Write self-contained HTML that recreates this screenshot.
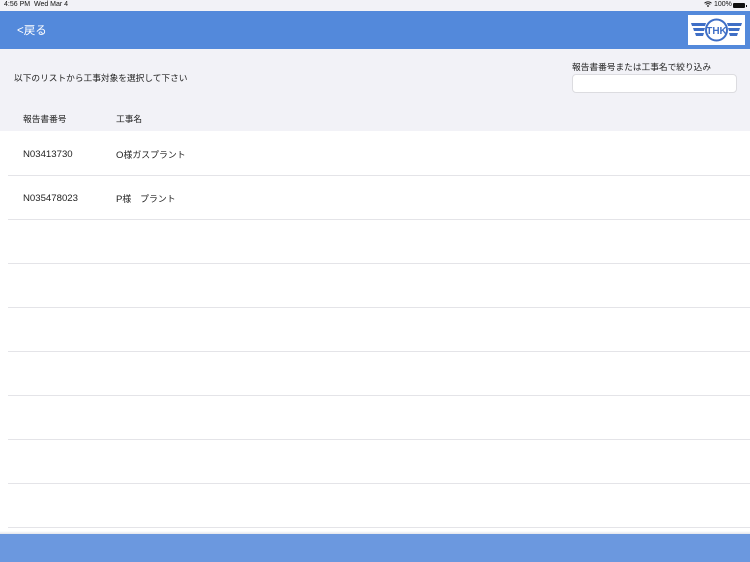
<!DOCTYPE html>
<html><head><meta charset="utf-8"><style>
*{margin:0;padding:0;box-sizing:border-box}
body{width:750px;height:562px;overflow:hidden;background:#f2f2f7;font-family:"Liberation Sans","Noto Sans CJK JP",sans-serif;color:#222;position:relative}
.abs{position:absolute}
.status{top:0;left:0;width:750px;height:11px;font-size:7px;color:#111;background:#f2f2f7}
.hdr{top:11px;left:0;width:750px;height:38px;background:#5389db}
.sep{left:8px;width:742px;height:1px;background:#e4e4e8}
.t{font-size:8.7px;line-height:12px;color:#222;white-space:nowrap}
.n{font-size:9.6px;line-height:12px;color:#222;white-space:nowrap}
</style></head><body>
<div class="abs status"><span class="abs" style="left:4px;top:1px">4:56 PM&nbsp;&nbsp;Wed Mar 4</span>
<span class="abs" style="left:704px;top:1px">
<svg width="8" height="6" viewBox="0 0 8 6" style="vertical-align:-1px"><path d="M0.5 2.2A5 5 0 0 1 7.5 2.2M1.8 3.4A3.2 3.2 0 0 1 6.2 3.4" stroke="#111" stroke-width="0.9" fill="none"/><circle cx="4" cy="5" r="0.9" fill="#111"/></svg> 100%</span>
<div class="abs" style="left:733px;top:3px;width:12px;height:5px;background:#111;border-radius:1px"></div>
<div class="abs" style="left:745.5px;top:4.5px;width:1px;height:2px;background:#111"></div>
</div>
<div class="abs hdr">
<span class="abs" style="left:17px;top:13px;font-size:11.5px;line-height:14px;color:#fff">&lt;戻る</span>
<div class="abs" style="left:688px;top:4px;width:57px;height:30px;background:#fff">
<svg width="57" height="30" viewBox="0 0 57 30">
<g fill="#3f6fc6">
<path d="M3 8h15l-1 3H4z"/><path d="M5 13h12l-1 3H6z"/><path d="M7 18h9l-1 3H8z"/>
<path d="M54 8H39l1 3h13z"/><path d="M52 13H40l1 3h10z"/><path d="M50 18H41l1 3h7z"/>
</g>
<circle cx="28.5" cy="15" r="10.5" fill="#fff" stroke="#3f6fc6" stroke-width="2"/>
<text x="28.5" y="19" font-size="10" text-anchor="middle" fill="#3f6fc6" font-family="Liberation Sans" font-weight="bold">THK</text>
</svg></div>
</div>
<span class="abs t" style="left:14px;top:72px">以下のリストから工事対象を選択して下さい</span>
<span class="abs t" style="left:572px;top:61px">報告書番号または工事名で絞り込み</span>
<div class="abs" style="left:572px;top:74px;width:165px;height:19px;background:#fff;border:1px solid #dcdce0;border-radius:4px"></div>
<span class="abs t" style="left:23px;top:113px">報告書番号</span>
<span class="abs t" style="left:116px;top:113px">工事名</span>
<div class="abs" style="left:0;top:131px;width:750px;height:400px;background:#fff"></div>
<span class="abs n" style="left:23px;top:149px">N03413730</span>
<span class="abs n" style="left:116px;top:149px">O<span style="font-size:8.9px">様ガスプラント</span></span>
<span class="abs n" style="left:23px;top:193px">N035478023</span>
<span class="abs n" style="left:116px;top:193px">P<span style="font-size:8.9px">様　プラント</span></span>
<div class="abs sep" style="top:175px"></div>
<div class="abs sep" style="top:219px"></div>
<div class="abs sep" style="top:263px"></div>
<div class="abs sep" style="top:307px"></div>
<div class="abs sep" style="top:351px"></div>
<div class="abs sep" style="top:395px"></div>
<div class="abs sep" style="top:439px"></div>
<div class="abs sep" style="top:483px"></div>
<div class="abs sep" style="top:527px"></div>
<div class="abs" style="left:0;top:531px;width:750px;height:3px;background:linear-gradient(#fff,#e4e6ec)"></div>
<div class="abs" style="left:0;top:534px;width:750px;height:28px;background:#6b98df"></div>
</body></html>
